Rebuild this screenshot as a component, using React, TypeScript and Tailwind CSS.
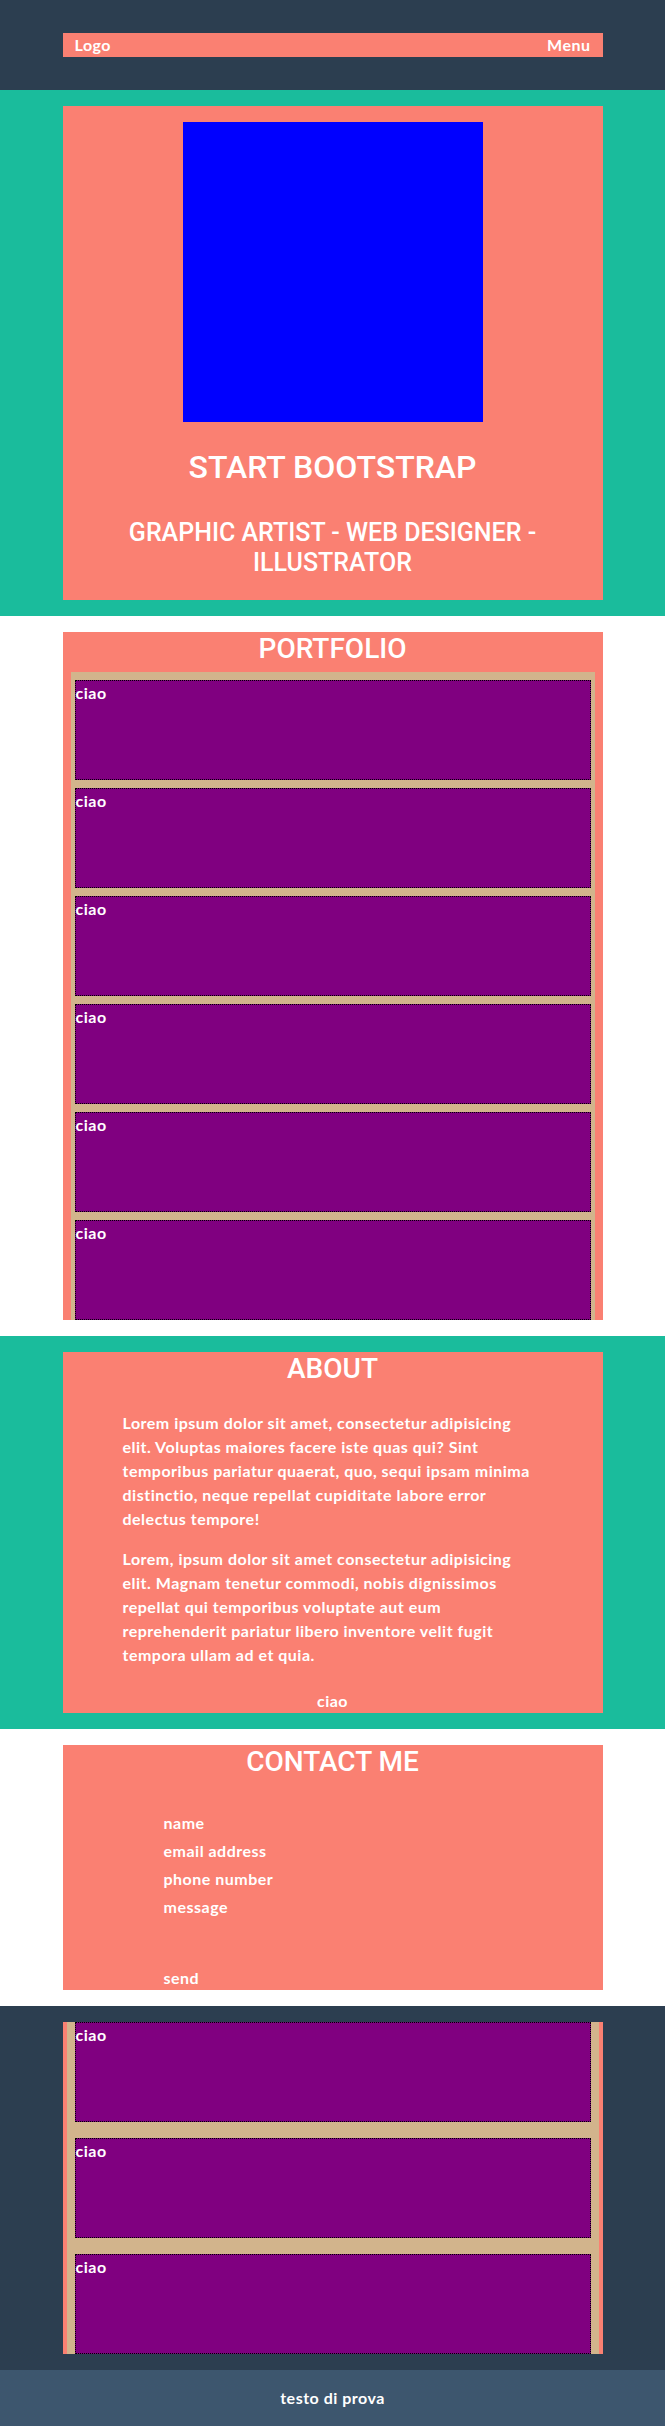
import React from 'react'

const cards = [1, 2, 3, 4, 5, 6]
const bottomCards = [1, 2, 3]

function Card() {
  return (
    <div className="h-[100px] border border-dotted border-black bg-[#800080] font-bold">ciao</div>
  )
}

const heading = "font-['Roboto',sans-serif] font-medium tracking-normal"

export default function App() {
  return (
    <div className="font-['Lato',sans-serif] text-base leading-6 tracking-[0.5px] text-white">
      {/* header */}
      <header className="bg-[#2c3e50] py-[33px]">
        <nav className="mx-auto flex w-[540px] items-center justify-between bg-[#fa8072] px-3 font-bold">
          <span>Logo</span>
          <span>Menu</span>
        </nav>
      </header>

      {/* hero */}
      <section className="bg-[#1abc9c] py-4">
        <div className="mx-auto flex w-[540px] flex-col items-center bg-[#fa8072] pt-4 pb-[22px] text-center">
          <div className="h-[300px] w-[300px] bg-[#0000ff]" />
          <h1 className={`mt-[26px] text-[32px] leading-[1.2] ${heading}`}>START BOOTSTRAP</h1>
          <h2 className={`mt-[32px] px-8 text-[25px] leading-[30px] ${heading}`}>
            GRAPHIC ARTIST - WEB DESIGNER - ILLUSTRATOR
          </h2>
        </div>
      </section>

      {/* portfolio */}
      <section className="bg-white py-4">
        <div className="mx-auto h-[688px] w-[540px] overflow-hidden bg-[#fa8072] px-2">
          <h2 className={`text-center text-[28px] leading-[34px] ${heading}`}>PORTFOLIO</h2>
          <div className="mt-[6px] flex flex-col gap-2 bg-[#d2b48c] px-1 pt-2">
            {cards.map(c => <Card key={c} />)}
          </div>
        </div>
      </section>

      {/* about */}
      <section className="bg-[#1abc9c] py-4">
        <div className="mx-auto w-[540px] bg-[#fa8072] font-bold">
          <h2 className={`text-center text-[28px] leading-[34px] ${heading}`}>ABOUT</h2>
          <div className="mt-[25px] px-[60px]">
            <p className="mb-4">
              Lorem ipsum dolor sit amet, consectetur adipisicing elit. Voluptas maiores facere iste quas qui? Sint
              temporibus pariatur quaerat, quo, sequi ipsam minima distinctio, neque repellat cupiditate labore error
              delectus tempore!
            </p>
            <p>
              Lorem, ipsum dolor sit amet consectetur adipisicing elit. Magnam tenetur commodi, nobis dignissimos
              repellat qui temporibus voluptate aut eum reprehenderit pariatur libero inventore velit fugit tempora
              ullam ad et quia.
            </p>
          </div>
          <p className="mt-[22px] text-center">ciao</p>
        </div>
      </section>

      {/* contact */}
      <section className="bg-white py-4">
        <div className="mx-auto w-[540px] bg-[#fa8072] font-bold">
          <h2 className={`text-center text-[28px] leading-[34px] ${heading}`}>CONTACT ME</h2>
          <form className="mt-[32px] flex flex-col gap-1 pl-[101px]">
            <label>name</label>
            <label>email address</label>
            <label>phone number</label>
            <label>message</label>
            <span className="mt-[43px]">send</span>
          </form>
        </div>
      </section>

      {/* more work */}
      <section className="bg-[#2c3e50] py-4">
        <div className="mx-auto w-[540px] bg-[#fa8072] px-1">
          <div className="flex flex-col gap-4 bg-[#d2b48c] px-2">
            {bottomCards.map(c => <Card key={c} />)}
          </div>
        </div>
      </section>

      <footer className="flex h-14 items-center justify-center bg-[#3d566e] font-bold">testo di prova</footer>
    </div>
  )
}
